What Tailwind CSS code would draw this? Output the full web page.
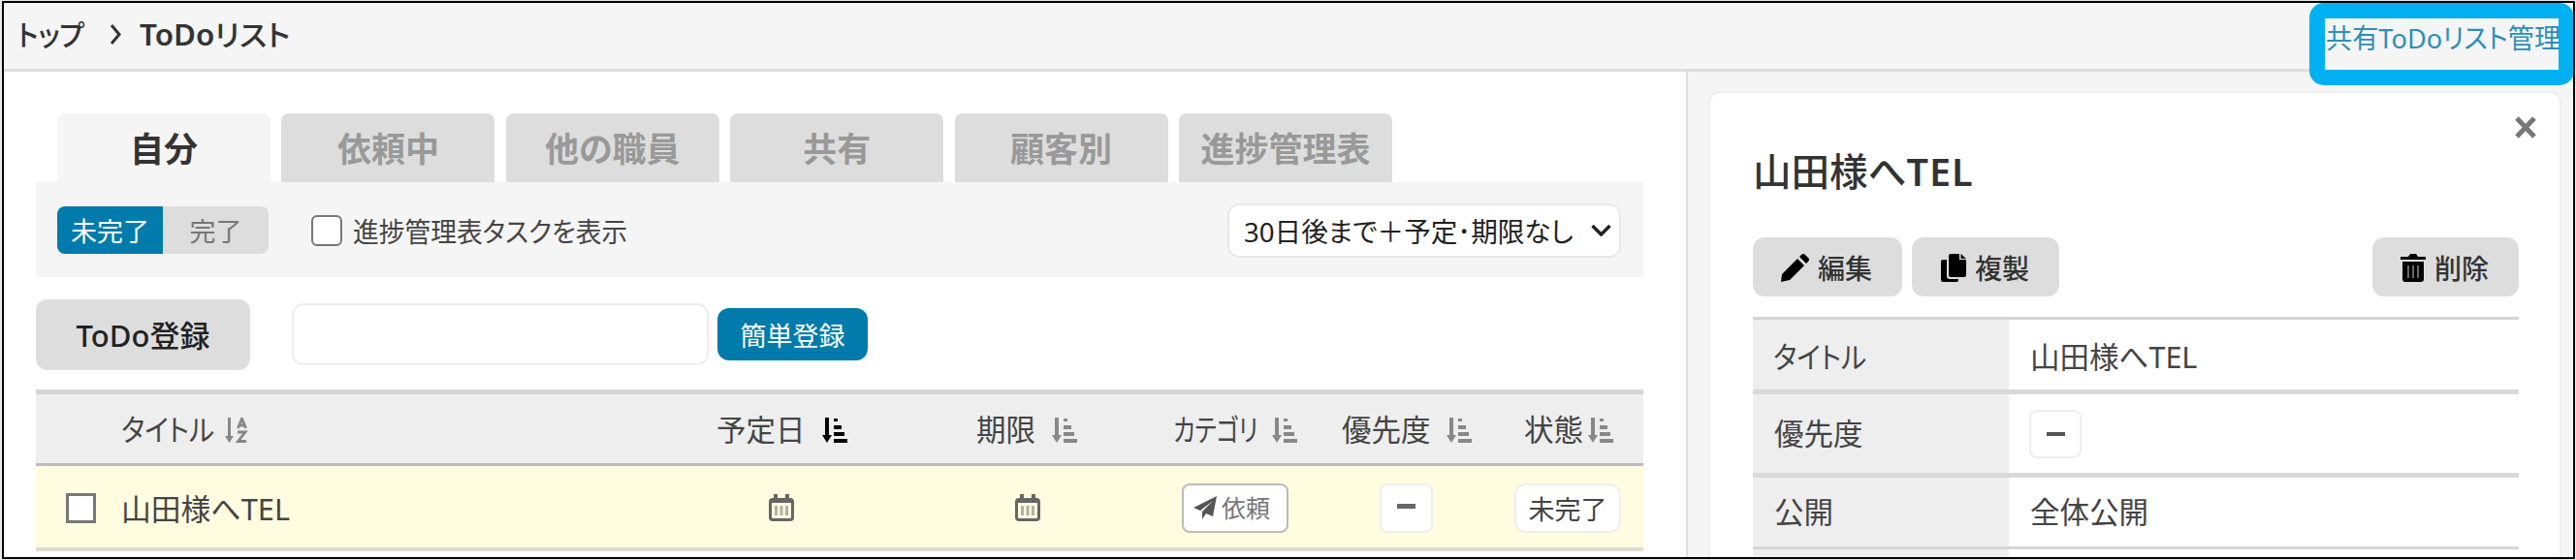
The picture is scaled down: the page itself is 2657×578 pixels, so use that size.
<!DOCTYPE html>
<html lang="ja">
  <head>
    <meta charset="UTF-8" />
    <meta name="viewport" content="width=device-width, initial-scale=1.0" />
    <title>ToDoリスト</title>
    <script src="https://cdn.jsdelivr.net/npm/@tailwindcss/browser@4"></script>
  </head>
  <body class="h-[578px] w-[2657px] overflow-hidden bg-[#e8ebe8] pt-px pl-[2px] font-['Noto_Sans','Noto_Sans_CJK_JP',sans-serif] text-[30.5px] leading-none text-[#444] whitespace-nowrap [font-feature-settings:'palt']">
    <!-- icon set -->
    <svg class="hidden">
      <symbol id="sort" viewBox="0 0 26 26" preserveAspectRatio="none">
        <path d="M3 0h4v18h3l-5 8-5-8h3zM12 1h4v3h-4zM12 8h8v4h-8zM12 15h11v4H12zM12 22h14v4H12z" />
      </symbol>
      <symbol id="calendar" viewBox="0 0 26 28">
        <path d="M5 0h4v4h8V0h4v4h1a4 4 0 0 1 4 4v16a4 4 0 0 1-4 4H4a4 4 0 0 1-4-4V8a4 4 0 0 1 4-4h1zM3 9v15q0 1 1 1h18q1 0 1-1V9z" fill-rule="evenodd" />
        <path d="M6 12h3v10H6zM11.500 12h3v10h-3zM17 12h3v10h-3z" opacity=".5" />
      </symbol>
    </svg>

    <div class="flex h-[576px] w-[2654px] flex-col overflow-hidden border-2 border-black bg-white">
      <header class="relative flex h-[71px] shrink-0 items-center border-b-[3px] border-[#ddd] bg-[#f5f5f5] pb-[3px] pl-[14px] text-[30px] font-medium text-[#333]">
        <span class="w-[95px]"><span class="inline-block origin-left scale-x-[.93]">トップ</span></span>
        <svg class="mr-[18px] h-[21px] w-[13px]" viewBox="0 0 13 21" fill="none" stroke="#333" stroke-width="3"><path d="M2 1l8 9.500L2 20" /></svg>
        <span class="inline-block origin-left scale-x-[1.045]"><span class="font-semibold">ToDo</span>リスト</span>
        <div class="absolute top-0 right-[-1px] h-[85px] w-[273px] rounded-[15px] bg-[#00b0f0] px-4 pt-4">
          <a class="block h-[53px] bg-[#f5f5f5] pt-[5px] pl-px text-[28px] leading-[30px] font-normal text-[#2b8fb8]"><span class="inline-block origin-left scale-x-[.97]">共有ToDoリスト管理</span></a>
        </div>
      </header>

      <div class="flex min-h-0 flex-1">
        <main class="w-[1737px] shrink-0 border-r-2 border-[#ddd] pt-[43px] pl-[33px]">
          <nav class="flex gap-[11.400px] pl-[22px] text-[35px] font-bold text-[#999]">
            <div class="flex h-[71px] w-[220px] items-center justify-center rounded-t-lg bg-[#f5f5f5] pt-0.5 text-[#333]">自分</div>
            <div class="flex h-[71px] w-[220px] items-center justify-center rounded-t-lg bg-[#ddd] pt-0.5">依頼中</div>
            <div class="flex h-[71px] w-[220px] items-center justify-center rounded-t-lg bg-[#ddd] pt-0.5">他の職員</div>
            <div class="flex h-[71px] w-[220px] items-center justify-center rounded-t-lg bg-[#ddd] pt-0.5">共有</div>
            <div class="flex h-[71px] w-[220px] items-center justify-center rounded-t-lg bg-[#ddd] pt-0.5">顧客別</div>
            <div class="flex h-[71px] w-[220px] items-center justify-center rounded-t-lg bg-[#ddd] pt-0.5">進捗管理表</div>
          </nav>

          <div class="flex h-[98px] w-[1658px] items-center bg-[#f5f5f5] pt-px pl-[22px] text-[28px]">
            <div class="flex h-[49px] w-[218px] overflow-hidden rounded-lg text-[27px]">
              <div class="flex w-[109px] items-center justify-center bg-[#007bab] pt-0.5 text-white">未完了</div>
              <div class="flex flex-1 items-center justify-center bg-[#ddd] pt-0.5 text-[#777]">完了</div>
            </div>
            <span class="ml-[44px] size-8 rounded-md border-2 border-[#777] bg-white"></span>
            <span class="ml-[11px] origin-left scale-x-[.955] pt-0.5">進捗管理表タスクを表示</span>
            <div class="mr-[23px] ml-auto flex h-[56px] w-[406px] items-center rounded-xl border-2 border-[#e8e8e8] bg-white pl-[15px] text-[#222]">
              <span class="w-[339px] origin-left scale-x-[.985] pt-0.5">30日後まで＋予定･期限なし</span>
              <svg class="mr-2 ml-auto h-[13px] w-[21px] shrink-0" viewBox="0 0 21 13" fill="none" stroke="#222" stroke-width="3.500"><path d="M1.500 2l9 9 9-9" /></svg>
            </div>
          </div>

          <div class="flex h-[116px] items-center pt-[2px]">
            <button class="h-[73px] w-[221px] rounded-xl bg-[#ddd] pt-0.5 text-[31px] font-medium text-[#222]">ToDo登録</button>
            <span class="ml-[43px] h-[64px] w-[430px] rounded-xl border-2 border-[#eee]"></span>
            <button class="ml-[9px] h-[54px] w-[155px] rounded-xl bg-[#007bab] pt-0.5 text-[27px] text-white">簡単登録</button>
          </div>

          <section class="w-[1658px]">
            <div class="flex h-[79px] items-center border-t-[5px] border-b-[3px] border-t-[#d5d5d5] border-b-[#bbb] bg-[#eee] fill-[#888] pt-0.5">
              <div class="flex w-[702px] items-center pl-[88px]">
                <span class="w-[106px]"><span class="inline-block origin-left scale-x-[.91]">タイトル</span></span>
                <svg class="h-[26px] w-[25px]" viewBox="0 0 25 26">
                  <path d="M4 0h3v19h3l-4.500 7L1 19h3z" />
                  <path d="M14.500 11l4-10 4 10M16 8h5M14 15h8l-7.500 9.500H23" fill="none" stroke="#888" stroke-width="2.800" />
                </svg>
              </div>
              <div class="flex w-[268px] items-center fill-black"><span class="w-[109px]">予定日</span><svg class="size-[26px]"><use href="#sort" /></svg></div>
              <div class="flex w-[203px] items-center"><span class="w-[78px]">期限</span><svg class="size-[26px]"><use href="#sort" /></svg></div>
              <div class="flex w-[174px] items-center"><span class="w-[102px]"><span class="inline-block origin-left scale-x-[.8]">カテゴリ</span></span><svg class="size-[26px]"><use href="#sort" /></svg></div>
              <div class="flex w-[188px] items-center"><span class="w-[108px]">優先度</span><svg class="size-[26px]"><use href="#sort" /></svg></div>
              <div class="flex items-center"><span class="w-[66px]">状態</span><svg class="size-[26px]"><use href="#sort" /></svg></div>
            </div>
            <div class="flex h-[88px] items-center border-b-4 border-[#ddddd0] bg-[#fffce0] pt-0.5">
              <span class="ml-[31px] size-[31px] border-[3px] border-[#777] bg-white"></span>
              <span class="ml-[26px] w-[668px] origin-left scale-x-[1.01] pt-0.5">山田様へTEL</span>
              <svg class="h-[28px] w-[26px] fill-[#666]"><use href="#calendar" /></svg>
              <svg class="ml-[228px] h-[28px] w-[26px] fill-[#666]"><use href="#calendar" /></svg>
              <div class="ml-[146px] flex h-[51px] w-[110px] items-center rounded-lg border-2 border-[#bbb] bg-white pl-[10px] text-[25px] text-[#777]">
                <svg class="mr-[5px] size-6" viewBox="0 0 24 24"><path d="M24 0L20 21l-7-3-4 6v-8L20 5 7 15l-7-3z" fill="#555" /></svg>依頼
              </div>
              <div class="ml-[94px] flex h-[51px] w-[55px] items-center justify-center rounded-lg border-2 border-[#eee] bg-white"><span class="mb-[3px] h-[5px] w-[19px] bg-[#666]"></span></div>
              <div class="ml-[84px] flex h-[51px] w-[110px] items-center justify-center rounded-xl border-2 border-[#eee] bg-white pt-0.5 text-[27px]">未完了</div>
            </div>
          </section>
        </main>

        <aside class="flex-1 bg-[#f5f5f5] pt-[20px] pl-[21px]">
          <div class="relative h-[500px] w-[880px] rounded-xl border-2 border-[#eee] bg-white pt-[60px] pl-[44px]">
            <svg class="absolute top-[24px] right-[23px] h-[23px] w-[24px]" viewBox="0 0 24 23" stroke="#777" stroke-width="5"><path d="M3 2l18 19M21 2L3 21" /></svg>
            <h1 class="h-[89px] text-[39.5px] leading-[42px] font-medium text-[#333]">山田様へ<span class="font-semibold tracking-[1px]">TEL</span></h1>
            <div class="flex w-[790px] gap-[10px] text-[28px] font-medium text-[#333]">
              <button class="flex h-[61px] w-[154px] items-center rounded-xl bg-[#ddd] pt-0.5 pl-[29px]">
                <svg class="mr-[9px] size-[29px]" viewBox="0 0 29 29"><path d="M21 1q2-2 4 0l3 3q2 2 0 4l-2 2-7-7zM17 5l7 7L9 27l-9 2 1-8z" /></svg>編集
              </button>
              <button class="flex h-[61px] w-[152px] items-center rounded-xl bg-[#ddd] pt-0.5 pl-[30px]">
                <svg class="mr-[9px] h-[29px] w-[26px]" viewBox="0 0 26 29"><path d="M10 0h9v6h7v16q0 2-2 2H10q-2 0-2-2V2q0-2 2-2zM20.500 0L26 5h-5.500zM2 6h4v17q0 3 3 3h9v1q0 2-2 2H2q-2 0-2-2V8q0-2 2-2z" /></svg>複製
              </button>
              <button class="ml-auto flex h-[61px] w-[151px] items-center rounded-xl bg-[#ddd] pt-0.5 pl-[29px]">
                <svg class="mr-[9px] h-[29px] w-[26px]" viewBox="0 0 26 29"><path d="M0 3h8l2-3h6l2 3h8v3H0zM2 8h22v18q0 3-3 3H5q-3 0-3-3z" /><path d="M8 12v13M13 12v13M18 12v13" stroke="#888" stroke-width="1.500" /></svg>削除
              </button>
            </div>
            <div class="mt-[21px] w-[790px]">
              <div class="flex h-[75px] border-t-[3px] border-[#d5d5d5]">
                <div class="flex w-[264px] items-center bg-[#eee] pt-1 pl-[21px]"><span class="inline-block origin-left scale-x-[.91]">タイトル</span></div>
                <div class="flex items-center pt-1 pl-[22px]">山田様へTEL</div>
              </div>
              <div class="flex h-[86px] border-t-[5px] border-[#d9d9d9]">
                <div class="flex w-[264px] items-center bg-[#eee] pl-[22px]">優先度</div>
                <div class="flex items-center pl-[21px]"><div class="flex h-[50px] w-[54px] items-center justify-center rounded-lg border-2 border-[#eee]"><span class="h-1 w-[19px] bg-[#555]"></span></div></div>
              </div>
              <div class="flex h-[76px] border-t-[5px] border-[#d9d9d9]">
                <div class="flex w-[264px] items-center bg-[#eee] pl-[22px]">公開</div>
                <div class="flex items-center pl-[22px]">全体公開</div>
              </div>
              <div class="flex h-[30px] border-t-[3px] border-[#d5d5d5]"><div class="w-[264px] bg-[#eee]"></div></div>
            </div>
          </div>
        </aside>
      </div>
    </div>
  </body>
</html>
